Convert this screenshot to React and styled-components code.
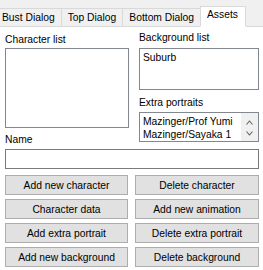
import React from 'react'
import styled, { createGlobalStyle } from 'styled-components'

const GlobalStyle = createGlobalStyle`
  html, body {
    margin: 0;
    padding: 0;
    background: #f0f0f0;
  }
  * {
    box-sizing: border-box;
  }
`

const tabs = ['Bust Dialog', 'Top Dialog', 'Bottom Dialog', 'Assets']

const buttons = [
    ['Add new character', 'Delete character'],
    ['Character data', 'Add new animation'],
    ['Add extra portrait', 'Delete extra portrait'],
    ['Add new background', 'Delete background'],
]

const App = () => {
    return (
        <Window>
            <GlobalStyle />
            <TabStrip>
                {tabs.map((t) => (
                    <Tab key={t} active={t === 'Assets'}>{t}</Tab>
                ))}
            </TabStrip>

            <Panel>
                <TopArea>
                    <Column>
                        <Label top={6} bottom={2}>Character list</Label>
                        <ListBox height={80} />
                        <Label top={5} bottom={2}>Name</Label>
                    </Column>

                    <Column>
                        <Label top={4} bottom={4}>Background list</Label>
                        <ListBox height={42}>
                            <Item>Suburb</Item>
                        </ListBox>
                        <Label top={6} bottom={3}>Extra portraits</Label>
                        <ListBox height={30} scroll>
                            <Item>Mazinger/Prof Yumi</Item>
                            <Item>Mazinger/Sayaka 1</Item>
                            <ScrollBar>
                                <svg width="7" height="5" viewBox="0 0 7 5">
                                    <path d="M0.5 4.5 L3.5 1 L6.5 4.5" fill="none" stroke="#606060" strokeWidth="1.1" />
                                </svg>
                                <svg width="7" height="5" viewBox="0 0 7 5">
                                    <path d="M0.5 0.5 L3.5 4 L6.5 0.5" fill="none" stroke="#606060" strokeWidth="1.1" />
                                </svg>
                            </ScrollBar>
                        </ListBox>
                    </Column>
                </TopArea>

                <TextInput />

                <ButtonGrid>
                    {buttons.flat().map((b) => (
                        <Button key={b}>{b}</Button>
                    ))}
                </ButtonGrid>
            </Panel>
        </Window>
    )
}

export default App

const Window = styled.div`
    width: 263px;
    height: 270px;
    display: flex;
    flex-direction: column;
    background: #f0f0f0;
    font-family: "Liberation Sans", Arial, sans-serif;
    font-size: 10.3px;
    color: #000;
    overflow: hidden;
`

const TabStrip = styled.div`
    height: 27px;
    display: flex;
    align-items: flex-end;
    padding-top: 6px;
    margin-left: -4px;
    position: relative;
    z-index: 1;
`

const Tab = styled.div`
    height: ${(p) => (p.active ? '21px' : '19px')};
    padding: ${(p) => (p.active ? '0 7px 0 6px' : '0 6px')};
    line-height: ${(p) => (p.active ? '16px' : '17px')};
    background: ${(p) => (p.active ? '#fff' : '#f0f0f0')};
    border: 1px solid #d9d9d9;
    border-bottom: ${(p) => (p.active ? '1px solid #fff' : '1px solid #d9d9d9')};
    margin-left: -1px;
    white-space: nowrap;
`

const Panel = styled.div`
    flex: 1;
    background: #fff;
    border-top: 1px solid #d9d9d9;
    margin-top: -1px;
    padding: 0 4px 0 5px;
    display: flex;
    flex-direction: column;
`

const TopArea = styled.div`
    display: grid;
    grid-template-columns: 124px 120px;
    column-gap: 10px;
`

const Column = styled.div`
    display: flex;
    flex-direction: column;
`

const Label = styled.div`
    line-height: 13px;
    margin-top: ${(p) => p.top}px;
    margin-bottom: ${(p) => p.bottom}px;
    white-space: nowrap;
`

const ListBox = styled.div`
    height: ${(p) => p.height}px;
    border: 1px solid #828790;
    background: #fff;
    padding: ${(p) => (p.scroll ? '2px 18px 0 3px' : '2px 3px')};
    position: relative;
    overflow: hidden;
`

const Item = styled.div`
    line-height: 13px;
    white-space: nowrap;
`

const ScrollBar = styled.div`
    position: absolute;
    top: 0;
    right: 0;
    bottom: 0;
    width: 17px;
    display: flex;
    flex-direction: column;
    justify-content: space-between;
    align-items: center;
    background: #f0f0f0;
    padding: 7px 0 5px;
`

const TextInput = styled.div`
    height: 20px;
    margin-top: 1px;
    border: 1px solid #7a7a7a;
    background: #fff;
`

const ButtonGrid = styled.div`
    margin-top: 6px;
    display: grid;
    grid-template-columns: 123px 124px;
    column-gap: 7px;
    row-gap: 4px;
`

const Button = styled.div`
    height: 20px;
    display: flex;
    align-items: center;
    justify-content: center;
    background: #e1e1e1;
    border: 1px solid #adadad;
    white-space: nowrap;
`
